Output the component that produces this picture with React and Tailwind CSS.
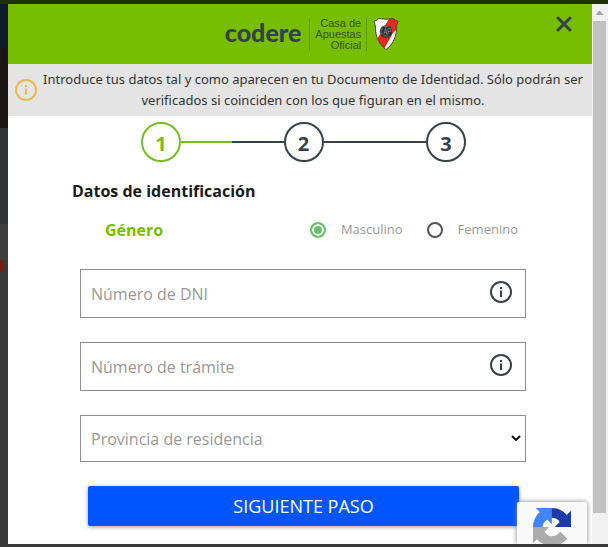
import React, { useState } from "react";

const steps = [1, 2, 3];

const InfoIcon = ({ className }) => (
  <svg viewBox="0 0 24 24" fill="none" stroke="currentColor" strokeWidth="2" className={className} aria-hidden="true">
    <circle cx="12" cy="12" r="10" />
    <path d="M12 10.5v6.5M12 7v2" />
  </svg>
);

const Shield = () => (
  <svg viewBox="0 0 26 34" className="h-[34px] w-[26px]" role="img" aria-label="River Plate">
    <defs>
      <clipPath id="shield">
        <path d="M1 4 Q4 4 5.500 1.500 Q13 3 20.500 1.500 Q22 4 25 4 Q23 9 23.500 14 Q22 26 13 32.500 Q4 26 2.500 14 Q3 9 1 4Z" />
      </clipPath>
    </defs>
    <g clipPath="url(#shield)">
      <path fill="#fff" d="M0 0h26v34H0z" />
      <path fill="#e32a1c" d="M17 0h9v10L20 16 11 32 3 23 6 19z" />
    </g>
    <path
      d="M1 4 Q4 4 5.500 1.500 Q13 3 20.500 1.500 Q22 4 25 4 Q23 9 23.500 14 Q22 26 13 32.500 Q4 26 2.500 14 Q3 9 1 4Z"
      fill="none"
      stroke="#4a3a2a"
      strokeWidth=".9"
    />
    <circle cx="13" cy="14.500" r="6.300" fill="#2b3036" />
    <path
      d="M10 12H8v5h2M10.800 17.500l1.700-6 1.500 6M11.500 15.500h2M15 17.500v-6h2.800v3H15M13 9v2M10.500 9.500h5M10.500 19h5"
      fill="none"
      stroke="#9aa1a5"
      strokeWidth=".6"
    />
  </svg>
);

const Recaptcha = () => (
  <svg viewBox="0 0 64 64" className="h-[38px] w-[38px]" role="img" aria-label="reCAPTCHA">
    <path
      fill="#1c3aa9"
      d="M64 31.955l-.033-1.37V4.687l-7.16 7.16C50.948 4.674 42.033.093 32.05.093c-10.4 0-19.622 4.96-25.458 12.64l11.736 11.86a15.55 15.55 0 0 1 4.754-5.334c2.05-1.6 4.952-2.906 8.968-2.906.485 0 .86.057 1.135.163 4.976.393 9.288 3.14 11.828 7.124l-8.307 8.307L64 31.953"
    />
    <path
      fill="#4285f4"
      d="M31.862.094l-1.37.033H4.594l7.16 7.16C4.58 13.147 0 22.06 0 32.046c0 10.4 4.96 19.622 12.64 25.458L24.5 45.768a15.55 15.55 0 0 1-5.334-4.754c-1.6-2.05-2.906-4.952-2.906-8.968 0-.485.057-.86.163-1.135.393-4.976 3.14-9.288 7.124-11.828l8.307 8.307L31.86.095"
    />
    <path
      fill="#ababab"
      d="M.001 32.045l.033 1.37v25.898l7.16-7.16c5.86 7.173 14.774 11.754 24.76 11.754 10.4 0 19.622-4.96 25.458-12.64l-11.736-11.86a15.55 15.55 0 0 1-4.754 5.334c-2.05 1.6-4.952 2.906-8.968 2.906-.485 0-.86-.057-1.135-.163-4.976-.393-9.288-3.14-11.828-7.124l8.307-8.307c-10.522.04-22.4.066-27.295-.005"
    />
  </svg>
);

const TextField = ({ label, value, onChange }) => (
  <div className="flex h-[49px] items-center border border-[#8f8f8f] pr-3">
    <input
      type="text"
      aria-label={label}
      placeholder={label}
      value={value}
      onChange={(e) => onChange(e.target.value)}
      className="h-full min-w-0 flex-1 px-[10px] text-[16px] text-[#36424a] placeholder:text-[#999] focus:outline-none"
    />
    <button type="button" aria-label={`Ayuda: ${label}`} className="pb-1 text-[#36424a]">
      <InfoIcon className="h-6 w-6" />
    </button>
  </div>
);

const App = () => {
  const [gender, setGender] = useState("Masculino");
  const [dni, setDni] = useState("");
  const [tramite, setTramite] = useState("");
  const [province, setProvince] = useState("");

  return (
    <div className="flex h-screen flex-col bg-[#3a3a3a] font-['Open_Sans','Noto_Sans',sans-serif]">
      <div className="h-1 shrink-0 bg-[#1f3300]" />

      <div className="flex min-h-0 flex-1">
        {/* Dimmed page behind the dialog */}
        <div className="flex w-2 shrink-0 flex-col">
          <div className="h-11 bg-[#0d1b2c]" />
          <div className="h-20 bg-[#1c1516]" />
          <div className="h-24 bg-[#323338]" />
          <div className="h-9 bg-[#3e3e3e]" />
          <div className="h-3 w-1 rounded-r-full bg-[#7a1c14]" />
          <div className="flex-1 bg-[#3a3a3a]" />
        </div>

        {/* Dialog */}
        <div className="relative min-w-0 flex-1 overflow-hidden bg-white">
          <header className="relative flex h-[60px] items-center justify-center bg-[#78be00] pl-6">
            <span className="pr-2 pb-1 font-['Lato',sans-serif] text-[25px] leading-8 font-black text-[#33424a]">codere</span>
            <p className="border-x border-[#5f9a0c] px-[5px] text-right font-['Liberation_Sans',sans-serif] text-[11px] leading-[11px] text-[#36521a]">
              Casa de
              <br />
              Apuestas
              <br />
              Oficial
            </p>
            <div className="pl-[6px]">
              <Shield />
            </div>
            <button type="button" aria-label="Cerrar" className="absolute top-3 right-5 text-[#36424a]">
              <svg viewBox="0 0 16 16" className="h-4 w-4" stroke="currentColor" strokeWidth="3" strokeLinecap="round">
                <path d="M2 2l12 12M14 2L2 14" />
              </svg>
            </button>
          </header>

          <div className="flex h-[52px] items-center bg-[#e4e4e4] pr-1 pl-[6px] text-[#333]">
            <InfoIcon className="h-6 w-6 shrink-0 text-[#eabb4d]" />
            <p className="flex-1 text-center font-['Noto_Sans','Open_Sans',sans-serif] text-[13px] leading-[21px]">
              Introduce tus datos tal y como aparecen en tu Documento de Identidad. Sólo podrán ser verificados si
              coinciden con los que figuran en el mismo.
            </p>
          </div>

          <form className="pt-[6px] pr-[66px] pl-[72px]" onSubmit={(e) => e.preventDefault()}>
            <ol className="mr-[60px] ml-[61px] flex items-center text-[20px] leading-6 font-bold text-[#36424a]">
              {steps.map((step) => (
                <React.Fragment key={step}>
                  {step > 1 && (
                    <li aria-hidden="true" className="flex h-[2px] flex-1 bg-[#36424a]">
                      {step === 2 && <span className="w-1/2 bg-[#78be20]" />}
                    </li>
                  )}
                  <li
                    className={`flex h-10 w-10 shrink-0 items-center justify-center rounded-full border-2 pt-1 ${
                      step === 1 ? "border-[#78be20] text-[#78be20]" : "border-[#36424a]"
                    }`}
                  >
                    {step}
                  </li>
                </React.Fragment>
              ))}
            </ol>

            <h2 className="-ml-2 pt-[17px] text-[16px] leading-6 font-bold text-[#1a1a1a]">Datos de identificación</h2>

            <div
              role="radiogroup"
              aria-labelledby="gender-title"
              className="flex h-[66px] items-center pr-2 pb-[12px] pl-[25px]"
            >
              <span id="gender-title" className="flex-1 text-[16px] font-bold text-[#78be00]">Género</span>
              <div className="flex gap-6 text-[13px] text-[#999]">
                {["Masculino", "Femenino"].map((option) => (
                  <label key={option} className="flex items-center gap-[15px]">
                    <input
                      type="radio"
                      name="gender"
                      checked={gender === option}
                      onChange={() => setGender(option)}
                      className="h-4 w-4 appearance-none rounded-full border-2 border-[#555] bg-white checked:border-[#6cc06c] checked:bg-[#6cc06c] checked:shadow-[inset_0_0_0_2px_white]"
                    />
                    {option}
                  </label>
                ))}
              </div>
            </div>

            <div className="flex flex-col gap-6">
              <TextField label="Número de DNI" value={dni} onChange={setDni} />
              <TextField label="Número de trámite" value={tramite} onChange={setTramite} />

              <div className="relative">
                <select
                  aria-label="Provincia de residencia"
                  value={province}
                  onChange={(e) => setProvince(e.target.value)}
                  className="block h-[47px] w-full appearance-none border border-[#8f8f8f] bg-white px-[10px] text-[16px] text-[#999]"
                >
                  <option value="">Provincia de residencia</option>
                </select>
                <svg
                  viewBox="0 0 10 6"
                  className="pointer-events-none absolute top-5 right-[5px] h-[6px] w-[10px]"
                  fill="none"
                  stroke="#111"
                  strokeWidth="2"
                >
                  <path d="M1 1l4 4 4-4" />
                </svg>
              </div>

              <button
                type="submit"
                className="mr-[7px] ml-2 h-10 rounded-xs bg-[#0055ff] text-[18px] text-white shadow-[0_1px_4px_rgba(0,0,0,0.4)]"
              >
                SIGUIENTE PASO
              </button>
            </div>
          </form>

          {/* reCAPTCHA badge */}
          <div className="absolute right-[5px] bottom-0 flex h-[42px] w-[70px] justify-center overflow-hidden rounded-t-xs bg-[#f9f9f9] pt-[6px] shadow-[0_0_5px_gray]">
            <div className="h-[38px] shrink-0">
              <Recaptcha />
            </div>
          </div>
        </div>

        {/* Scrollbar */}
        <div className="flex w-4 shrink-0 flex-col bg-[#f1f1f1] pr-[2px] pl-px">
          <svg viewBox="0 0 13 17" className="h-[17px] w-[13px]" fill="#a3a3a3">
            <path d="M2.500 11L6.500 6.500 10.500 11z" />
          </svg>
          <div className="mb-[31px] flex-1 bg-[#c1c1c1]" />
        </div>
      </div>

      <div className="h-[3px] shrink-0 bg-[#3a3a3a]" />
    </div>
  );
};

export default App;
